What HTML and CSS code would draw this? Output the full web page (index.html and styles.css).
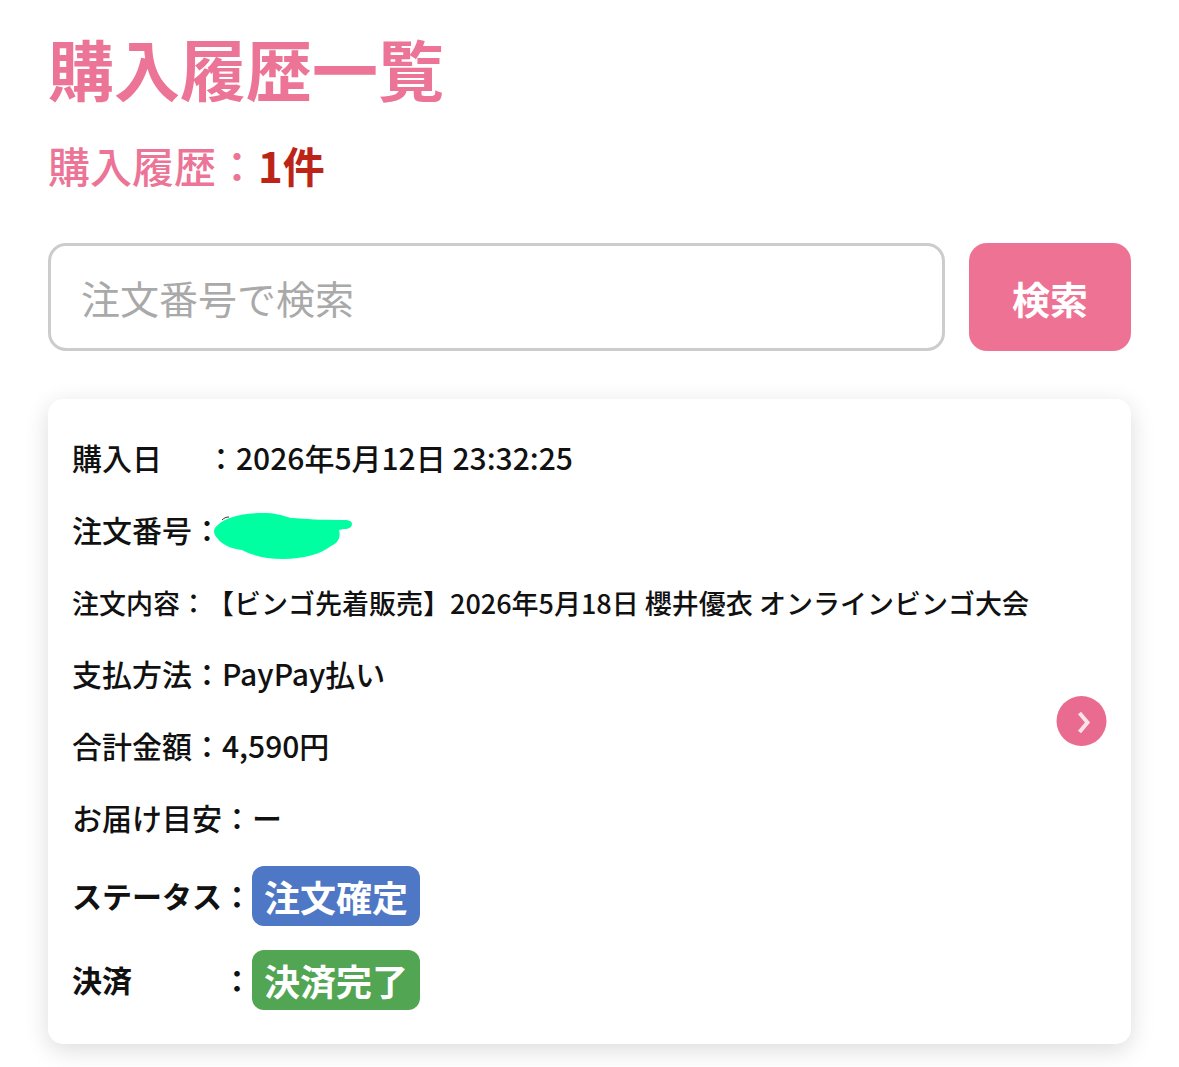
FILE: index.html
```html
<!DOCTYPE html>
<html lang="ja">
<head>
<meta charset="utf-8">
<title>購入履歴一覧</title>
<link rel="stylesheet" href="styles.css">
</head>
<body>
<main class="page">
  <h1 class="title">購入履歴一覧</h1>
  <p class="count">購入履歴：<strong class="count-num">1件</strong></p>
  <form class="search">
    <input class="search-input" type="text" placeholder="注文番号で検索">
    <button class="search-btn" type="button">検索</button>
  </form>
  <section class="card">
    <div class="row"><span class="label label-date">購入日</span><span>：2026年5月12日 23:32:25</span></div>
    <div class="row row-order"><span>注文番号：</span>
      <svg class="blob" viewBox="0 0 140 48" aria-hidden="true">
        <path d="M2 16C8 7 26 1 50 1C62 1 68 3 78 6C94 7 106 8 131 8C137 8 139 10 139 12C139 15 136 17 131 17L126 18C128 25 125 31 118 34C108 42 90 47 70 47C52 47 38 43 29 38C20 37 9 33 5 27C1 23 0 19 2 16Z" fill="#00ffa0"/>
        <path d="M9 8C11 6 13 5 16 5" stroke="#333" stroke-width="1" fill="none"/>
      </svg>
    </div>
    <div class="row row-small"><span>注文内容：【ビンゴ先着販売】2026年5月18日 櫻井優衣 オンラインビンゴ大会</span></div>
    <div class="row"><span>支払方法：PayPay払い</span></div>
    <div class="row"><span>合計金額：4,590円</span></div>
    <div class="row"><span class="label label-wide">お届け目安</span><span>：ー</span></div>
    <div class="row row-status"><strong class="label label-wide">ステータス</strong><strong class="colon">：</strong><span class="badge badge-blue">注文確定</span></div>
    <div class="row row-status"><strong class="label label-wide">決済</strong><strong class="colon">：</strong><span class="badge badge-green">決済完了</span></div>
    <span class="arrow">
      <svg viewBox="0 0 51 51" width="51" height="51" aria-hidden="true">
        <circle cx="25.5" cy="25.5" r="25" fill="#ea6b90"/>
        <path d="M23.5 17.5L31.5 27L23.5 36.5" fill="none" stroke="#fbe3ea" stroke-width="4"/>
      </svg>
    </span>
  </section>
</main>
</body>
</html>
```

FILE: styles.css
```css
* {
  box-sizing: border-box;
}

html,
body {
  margin: 0;
  padding: 0;
  background: #fff;
}

body {
  font-family: "Noto Sans CJK JP", "Noto Sans", sans-serif;
  color: #111;
  text-spacing-trim: space-all;
}

.page {
  padding: 20px 48px 23px;
}

.title {
  margin: 0;
  font-size: 66px;
  line-height: 94px;
  font-weight: 700;
  color: #ec7496;
}

.count {
  margin: 21px 0 0;
  font-size: 42px;
  line-height: 60px;
  font-weight: 500;
  color: #ec7496;
}

.count-num {
  font-weight: 700;
  color: #bd2418;
}

.search {
  display: flex;
  gap: 24px;
  margin-top: 48px;
}

.search-input {
  flex: 1;
  min-width: 0;
  height: 108px;
  padding: 0 30px;
  border: 3px solid #cccccc;
  border-radius: 18px;
  background: #fff;
  font-family: inherit;
  font-size: 39px;
  outline: none;
}

.search-input::placeholder {
  color: #a9a9a9;
  opacity: 1;
}

.search-btn {
  width: 162px;
  height: 108px;
  border: 0;
  border-radius: 18px;
  background: #ee7294;
  color: #fff;
  font-family: inherit;
  font-size: 38px;
  font-weight: 700;
}

.card {
  position: relative;
  margin-top: 48px;
  padding: 22px 24px 23px;
  border-radius: 15px;
  background: #fff;
  box-shadow: 0 6px 24px rgba(0, 0, 0, 0.14);
}

.row {
  display: flex;
  align-items: center;
  height: 72px;
  font-size: 30px;
  font-weight: 500;
  white-space: nowrap;
}

.row-small {
  padding-top: 2px;
  font-size: 27px;
}

.row-order {
  position: relative;
}

.row-status {
  height: 84px;
}

.label {
  display: inline-block;
}

.label-date {
  width: 134px;
}

.label-wide {
  width: 150px;
}

.colon {
  width: 30px;
  font-weight: 700;
}

.badge {
  display: inline-block;
  width: 168px;
  height: 60px;
  margin-top: 2px;
  border-radius: 12px;
  color: #fff;
  font-size: 36px;
  font-weight: 700;
  line-height: 60px;
  text-align: center;
}

.badge-blue {
  background: #4e77c5;
}

.badge-green {
  background: #52a552;
}

.blob {
  position: absolute;
  left: 141px;
  top: 19px;
  width: 140px;
  height: 48px;
}

.arrow {
  position: absolute;
  right: 24px;
  top: 50%;
  width: 51px;
  height: 51px;
  margin-top: -1px;
  transform: translateY(-50%);
  filter: blur(0.7px);
}
```
